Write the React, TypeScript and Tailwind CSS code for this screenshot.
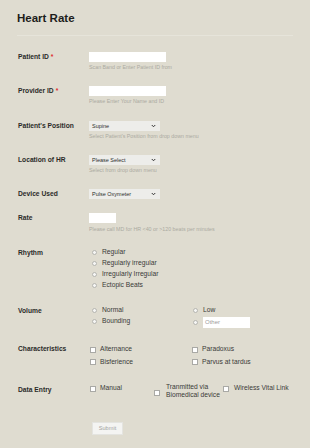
import React from "react";

type Row = { label: string; required?: boolean };

function Label({ label, required, lh = "leading-[10px]" }: Row & { lh?: string }) {
	return (
		<div className={`w-[71px] shrink-0 text-[6.7px] font-bold text-[#2a2a28] ${lh}`}>
			{label}
			{required && <span className="text-[#e0282e] ml-[2px]">*</span>}
		</div>
	);
}

function Hint({ text, mt = "mt-[2px]" }: { text: string; mt?: string }) {
	return <div className={`${mt} text-[5.3px] leading-[6px] text-[#abaaa1]`}>{text}</div>;
}

function Select({ value }: { value: string }) {
	return (
		<div className="w-[71px] h-[10px] bg-[#ededea] flex items-center justify-between pl-[3px] pr-[4px] text-[5.5px] text-[#2e2e2c]">
			<span>{value}</span>
			<svg width="5" height="4" viewBox="0 0 10 8">
				<path d="M1.5 2 L5 5.5 L8.5 2" fill="none" stroke="#333" strokeWidth="2" />
			</svg>
		</div>
	);
}

function Radio({ text, className = "" }: { text: string; className?: string }) {
	return (
		<div className={`flex items-center h-[11px] ${className}`}>
			<span className="w-[5px] h-[5px] rounded-full border-[0.5px] border-[#b5b5b0] bg-[#f6f6f4] ml-[3px] mr-[5px] mt-[1px]" />
			<span className="text-[6.7px] text-[#3a3a38]">{text}</span>
		</div>
	);
}

function Check({ text, className = "" }: { text: string; className?: string }) {
	return (
		<div className={`flex items-center h-[12.5px] ${className}`}>
			<span className="w-[6px] h-[6px] border-[0.5px] border-[#a9a9a5] bg-white ml-[2px] mr-[4px] mt-[1px] shrink-0" />
			<span className="text-[6.7px] text-[#3a3a38]">{text}</span>
		</div>
	);
}

export default function App() {
	return (
		<div
			className="w-[310px] h-[448px] bg-[#dfdcd0] px-[17px] overflow-hidden"
			style={{ fontFamily: '"Liberation Sans", Arial, sans-serif' }}
		>
			<h1 className="pt-[11px] text-[11.5px] leading-[14px] font-bold text-[#1d1d1b]">Heart Rate</h1>
			<div className="mt-[10px] h-px bg-[#e6e4da]" />

			<div className="pl-px">
				{/* Patient ID */}
				<div className="flex mt-[16px]">
					<Label label="Patient ID" required />
					<div>
						<div className="w-[77px] h-[10px] bg-white" />
						<Hint text="Scan Band or Enter Patient ID from" />
					</div>
				</div>

				{/* Provider ID */}
				<div className="flex mt-[16px]">
					<Label label="Provider ID" required />
					<div>
						<div className="w-[77px] h-[10px] bg-white" />
						<Hint text="Please Enter Your Name and ID" />
					</div>
				</div>

				<div className="flex mt-[17px]">
					<Label label="Patient's Position" />
					<div>
						<Select value="Supine" />
						<Hint text="Select Patient's Position from drop down menu" />
					</div>
				</div>

				<div className="flex mt-[16px]">
					<Label label="Location of HR" />
					<div>
						<Select value="Please Select" />
						<Hint text="Select from drop down menu" />
					</div>
				</div>

				<div className="flex mt-[16px]">
					<Label label="Device Used" />
					<Select value="Pulse Oxymeter" />
				</div>

				<div className="flex mt-[14px]">
					<Label label="Rate" />
					<div>
						<div className="w-[27px] h-[10px] bg-white" />
						<Hint text="Please call MD for HR <40 or >120 beats per minutes" mt="mt-[3px]" />
					</div>
				</div>

				{/* Rhythm */}
				<div className="flex mt-[14.5px]">
					<Label label="Rhythm" lh="leading-[11px]" />
					<div>
						<Radio text="Regular" />
						<Radio text="Regularly irregular" />
						<Radio text="Irregularly Irregular" />
						<Radio text="Ectopic Beats" />
					</div>
				</div>

				{/* Volume */}
				<div className="flex mt-[14px]">
					<Label label="Volume" lh="leading-[11px]" />
					<div className="grid grid-cols-[101px_auto]">
						<Radio text="Normal" />
						<Radio text="Low" />
						<Radio text="Bounding" />
						<div className="flex items-center h-[12px] mt-[0.5px]">
							<span className="w-[5px] h-[5px] rounded-full border-[0.5px] border-[#b5b5b0] bg-[#f6f6f4] ml-[3px] mr-[5px] mt-[1px]" />
							<div className="w-[47px] h-[11px] bg-white flex items-center pl-[2px] text-[6px] text-[#9d9d9a]">
								Other
							</div>
						</div>
					</div>
				</div>

				{/* Characteristics */}
				<div className="flex mt-[15px]">
					<Label label="Characteristics" lh="leading-[12.5px]" />
					<div className="grid grid-cols-[102px_auto] -ml-px">
						<Check text="Alternance" />
						<Check text="Paradoxus" />
						<Check text="Bisferience" />
						<Check text="Parvus at tardus" />
					</div>
				</div>

				{/* Data Entry */}
				<div className="flex mt-[15px]">
					<Label label="Data Entry" lh="leading-[13px]" />
					<div className="flex items-start -ml-px">
						<div className="w-[66px] flex items-center h-[10px]">
							<span className="w-[6px] h-[6px] border-[0.5px] border-[#a9a9a5] bg-white ml-[2px] mr-[4px] mt-[1px] shrink-0" />
							<span className="text-[6.7px] text-[#3a3a38]">Manual</span>
						</div>
						<div className="w-[69px] flex items-center">
							<span className="w-[6px] h-[6px] border-[0.5px] border-[#a9a9a5] bg-white mr-[6px] mt-[4px] shrink-0" />
							<span className="text-[6.7px] leading-[8px] text-[#3a3a38]">
								Tranmitted via
								<br />
								Biomedical device
							</span>
						</div>
						<div className="flex items-center h-[10px]">
							<span className="w-[6px] h-[6px] border-[0.5px] border-[#a9a9a5] bg-white mr-[5px] mt-[1px] shrink-0" />
							<span className="text-[6.7px] text-[#3a3a38]">Wireless Vital Link</span>
						</div>
					</div>
				</div>

				<div className="flex mt-[23px]">
					<div className="w-[74px] shrink-0" />
					<button className="w-[31px] h-[13px] bg-[#f4f4f2] border-[0.5px] border-[#e4e4e0] text-[5.6px] text-[#a3a3a0]">
						Submit
					</button>
				</div>
			</div>
		</div>
	);
}
